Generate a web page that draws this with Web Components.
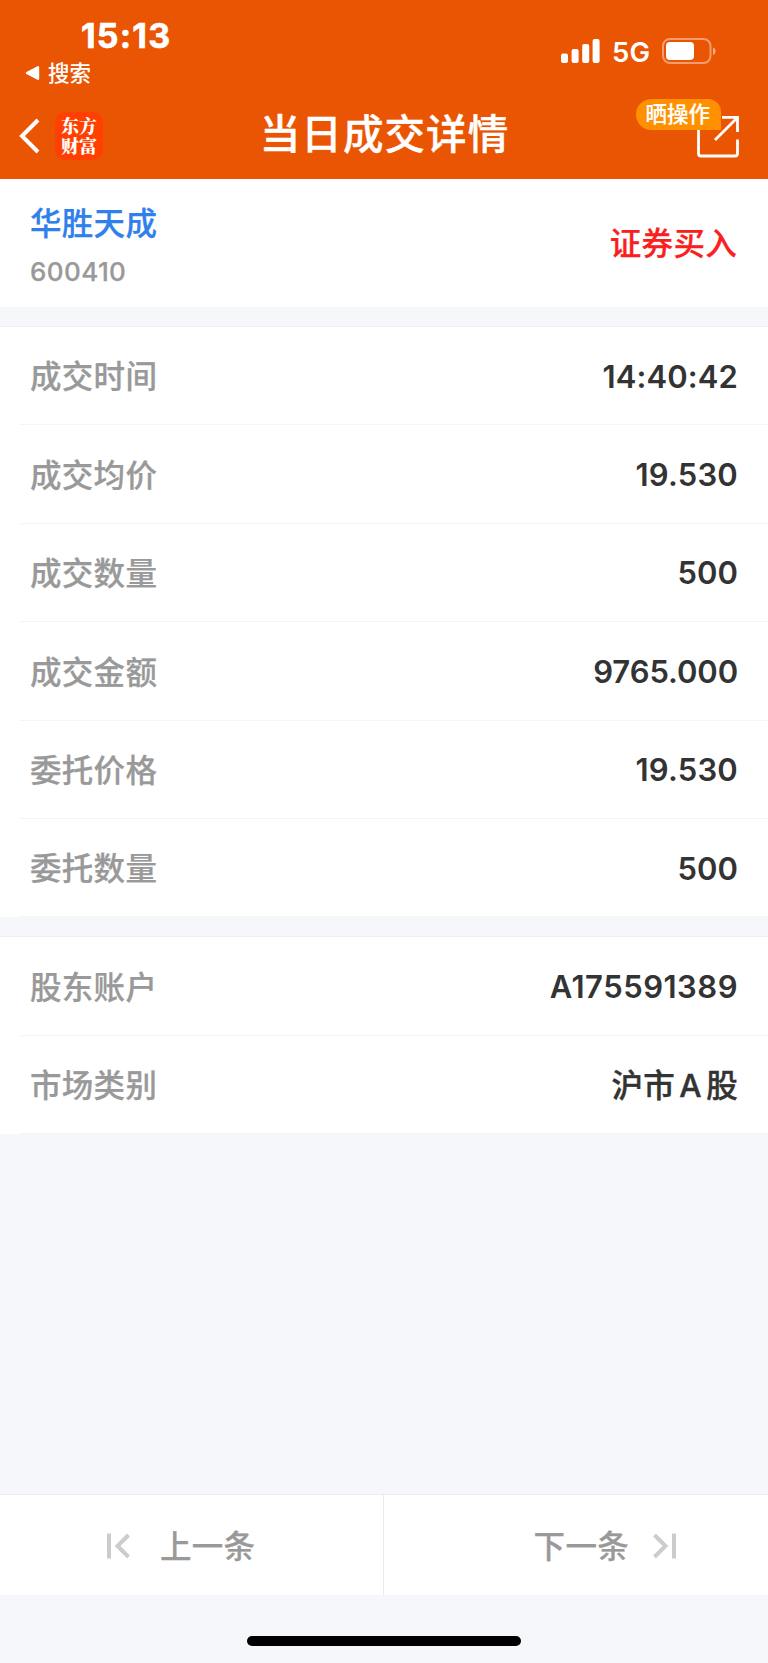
<!DOCTYPE html>
<html lang="zh-CN">
<head>
<meta charset="UTF-8">
<title>当日成交详情</title>
<style>
  body {
    margin: 0;
    width: 768px;
    height: 1663px;
    display: flex;
    flex-direction: column;
    overflow: hidden;
    background: #f6f7fa;
    font-family: Inter, "Noto Sans CJK SC", sans-serif;
    font-size: 31.5px;
    font-weight: 500;
    line-height: 1;
    color: #333;
  }
</style>
</head>
<body>
<status-bar time="15:13" network="5G">搜索</status-bar>
<nav-bar action="晒操作">当日成交详情</nav-bar>
<stock-summary code="600410">华胜天成<span slot="side">证券买入</span></stock-summary>
<detail-group>
  <detail-row label="成交时间" style="--track: 0.1px">14:40:42</detail-row>
  <detail-row label="成交均价" style="--track: 0.2px">19.530</detail-row>
  <detail-row label="成交数量">500</detail-row>
  <detail-row label="成交金额" style="--track: -0.1px">9765.000</detail-row>
  <detail-row label="委托价格" style="--track: 0.2px">19.530</detail-row>
  <detail-row label="委托数量">500</detail-row>
</detail-group>
<detail-group>
  <detail-row label="股东账户" style="--track: 0.5px">A175591389</detail-row>
  <detail-row label="市场类别" class="cjk" style="--track: 0.3px">沪市 A 股</detail-row>
</detail-group>
<pager-bar></pager-bar>
<home-indicator></home-indicator>

<script>
class StatusBar extends HTMLElement {
  connectedCallback() {
    this.attachShadow({ mode: 'open' });
    this.shadowRoot.innerHTML = `
      <style>
        :host {
          display: flex;
          justify-content: space-between;
          flex: none;
          height: 94px;
          box-sizing: border-box;
          padding: 20px 52px 0 25px;
          background: #ea5504;
          color: #fff;
        }
        .time {
          margin-left: 56px;
          font-size: 34px;
          font-weight: 700;
          letter-spacing: 1.2px;
          line-height: 32px;
          -webkit-text-stroke: 0.6px;
        }
        .back {
          display: flex;
          align-items: center;
          gap: 8px;
          margin-top: 11px;
          font-size: 21.5px;
          line-height: 20px;
        }
        .right {
          display: flex;
          align-items: center;
          height: 26px;
          margin-top: 18px;
        }
        .net {
          margin: 2px 12px 0 12px;
          font-size: 27.5px;
          font-weight: 600;
          line-height: 26px;
        }
        svg { display: block; }
      </style>
      <div>
        <div class="time">${this.getAttribute('time')}</div>
        <div class="back">
          <svg width="15" height="16" viewBox="0 0 15 16"><path d="M2 8 13 2.2V13.8Z" fill="#fff" stroke="#fff" stroke-width="2.4" stroke-linejoin="round"/></svg>
          <slot></slot>
        </div>
      </div>
      <div class="right">
        <svg width="39" height="26" viewBox="0 0 39 26" fill="#fff">
          <rect x="0" y="15.5" width="7" height="9.5" rx="2"/>
          <rect x="10.6" y="11" width="7" height="14" rx="2"/>
          <rect x="21.2" y="6" width="7" height="19" rx="2"/>
          <rect x="31.6" y="1" width="7" height="24" rx="2"/>
        </svg>
        <span class="net">${this.getAttribute('network')}</span>
        <svg width="54" height="26" viewBox="0 0 54 26">
          <rect x="1" y="1" width="47.5" height="24" rx="7" fill="none" stroke="#fff" stroke-opacity=".42" stroke-width="2"/>
          <rect x="4" y="4" width="28" height="18" rx="4" fill="#fff"/>
          <path d="M51 9.4c3.4 1 3.4 6.600 0 7.600z" fill="#fff" fill-opacity=".5"/>
        </svg>
      </div>
    `;
  }
}
customElements.define('status-bar', StatusBar);

class NavBar extends HTMLElement {
  connectedCallback() {
    this.attachShadow({ mode: 'open' });
    this.shadowRoot.innerHTML = `
      <style>
        :host {
          display: grid;
          grid-template-columns: 1fr auto 1fr;
          align-items: center;
          flex: none;
          height: 85px;
          box-sizing: border-box;
          padding: 0 28px 0 18px;
          background: #ea5504;
          color: #fff;
        }
        .left {
          display: flex;
          align-items: center;
          gap: 14px;
          padding-bottom: 1px;
        }
        .logo {
          width: 48px;
          height: 48px;
          box-sizing: border-box;
          padding: 3px 5px 0 6px;
          border-radius: 10px;
          background: #ff4000;
          font: 900 18px/20px "Noto Serif CJK SC", "Noto Sans CJK SC", serif;
          word-break: break-all;
        }
        .title {
          font-size: 40.5px;
          letter-spacing: 1.1px;
          line-height: 50px;
          padding: 0 0 3px 11px;
          -webkit-text-stroke: 0.4px;
        }
        .share {
          position: relative;
          justify-self: end;
          width: 43px;
          height: 43px;
        }
        .badge {
          position: absolute;
          right: 19px;
          top: -16.500px;
          width: 85px;
          height: 31px;
          border-radius: 15.500px 13px 0 15.500px;
          background: #ff9000;
          font-size: 21.5px;
          line-height: 31px;
          text-align: center;
          text-indent: -1.500px;
          white-space: nowrap;
          -webkit-text-stroke: 0.2px;
        }
        svg { display: block; }
      </style>
      <div class="left">
        <svg width="23" height="36" viewBox="0 0 23 36"><path d="M20 2 4 18 20 34" fill="none" stroke="#fff" stroke-width="4"/></svg>
        <div class="logo">东方财富</div>
      </div>
      <div class="title"><slot></slot></div>
      <div class="share">
        <svg width="43" height="43" viewBox="0 0 43 43" fill="none" stroke="#fff" stroke-width="2.800">
          <path d="M1.500 12V38.500a2.500 2.500 0 0 0 2.500 2.500H38a2.500 2.500 0 0 0 2.500-2.500V24.500"/>
          <path d="M25 2.300H40.500V17M40 3 18 25"/>
        </svg>
        <span class="badge">${this.getAttribute('action')}</span>
      </div>
    `;
  }
}
customElements.define('nav-bar', NavBar);

class StockSummary extends HTMLElement {
  connectedCallback() {
    this.attachShadow({ mode: 'open' });
    this.shadowRoot.innerHTML = `
      <style>
        :host {
          display: flex;
          align-items: center;
          justify-content: space-between;
          flex: none;
          height: 128px;
          box-sizing: border-box;
          padding: 0 31px 0 30px;
          background: #fff;
          letter-spacing: 0.3px;
          -webkit-text-stroke: 0.25px;
        }
        .name {
          margin-top: 4px;
          color: #2f80ea;
          line-height: 36px;
        }
        .code {
          margin-top: 17px;
          color: #999;
          font-size: 26px;
          letter-spacing: 0.4px;
          line-height: 26px;
        }
        .side {
          padding-top: 1px;
          color: #f91f1f;
        }
      </style>
      <div>
        <div class="name"><slot></slot></div>
        <div class="code">${this.getAttribute('code')}</div>
      </div>
      <div class="side"><slot name="side"></slot></div>
    `;
  }
}
customElements.define('stock-summary', StockSummary);

class DetailGroup extends HTMLElement {
  connectedCallback() {
    this.attachShadow({ mode: 'open' });
    this.shadowRoot.innerHTML = `
      <style>
        :host {
          display: block;
          flex: none;
          margin-top: 19px;
          border-top: 1px solid #efeff0;
          background: #fff;
        }
      </style>
      <slot></slot>
    `;
  }
}
customElements.define('detail-group', DetailGroup);

class DetailRow extends HTMLElement {
  connectedCallback() {
    this.attachShadow({ mode: 'open' });
    this.shadowRoot.innerHTML = `
      <style>
        :host {
          display: flex;
          align-items: center;
          justify-content: space-between;
          height: 98.400px;
          box-sizing: border-box;
          margin-left: 20px;
          padding: 1px 30px 0 10px;
          border-bottom: 1px solid #f5f5f6;
        }
        .label {
          padding-top: 2px;
          color: #999;
          letter-spacing: 0.3px;
          -webkit-text-stroke: 0.25px;
        }
        .value {
          font-weight: 600;
          font-size: 31px;
          letter-spacing: var(--track, 0);
        }
        :host(.cjk) .value {
          padding-top: 2px;
          font-weight: 500;
          font-size: 31.5px;
          word-spacing: -4.500px;
          -webkit-text-stroke: 0.4px;
        }
      </style>
      <span class="label">${this.getAttribute('label')}</span>
      <span class="value"><slot></slot></span>
    `;
  }
}
customElements.define('detail-row', DetailRow);

class PagerBar extends HTMLElement {
  connectedCallback() {
    this.attachShadow({ mode: 'open' });
    this.shadowRoot.innerHTML = `
      <style>
        :host {
          display: grid;
          grid-template-columns: 1fr 1fr;
          flex: none;
          height: 101px;
          box-sizing: border-box;
          margin-top: auto;
          border-top: 1px solid #ededef;
          background: #fff;
          color: #999;
          letter-spacing: 0.3px;
        }
        .item {
          display: flex;
          align-items: center;
          box-sizing: border-box;
        }
        .prev {
          gap: 29px;
          padding-left: 106px;
          border-right: 1px solid #ebebed;
        }
        .next {
          justify-content: flex-end;
          gap: 23px;
          padding-right: 91px;
        }
        span {
          padding-top: 3px;
          -webkit-text-stroke: 0.25px;
        }
        svg {
          padding-top: 1px;
          fill: none;
          stroke: #ccc;
          stroke-width: 4;
        }
      </style>
      <div class="item prev">
        <svg width="25" height="26" viewBox="0 0 25 26"><path d="M3 .5V25.500M22.500 2 11.500 13 22.500 24"/></svg>
        <span>上一条</span>
      </div>
      <div class="item next">
        <span>下一条</span>
        <svg width="25" height="26" viewBox="0 0 25 26"><path d="M22 .5V25.500M2.500 2 13.500 13 2.500 24"/></svg>
      </div>
    `;
  }
}
customElements.define('pager-bar', PagerBar);

class HomeIndicator extends HTMLElement {
  connectedCallback() {
    this.attachShadow({ mode: 'open' });
    this.shadowRoot.innerHTML = `
      <style>
        :host {
          display: flex;
          justify-content: center;
          flex: none;
          height: 68px;
          box-sizing: border-box;
          padding-top: 41px;
        }
        i {
          width: 274px;
          height: 10px;
          border-radius: 5px;
          background: #000;
        }
      </style>
      <i></i>
    `;
  }
}
customElements.define('home-indicator', HomeIndicator);
</script>
</body>
</html>
